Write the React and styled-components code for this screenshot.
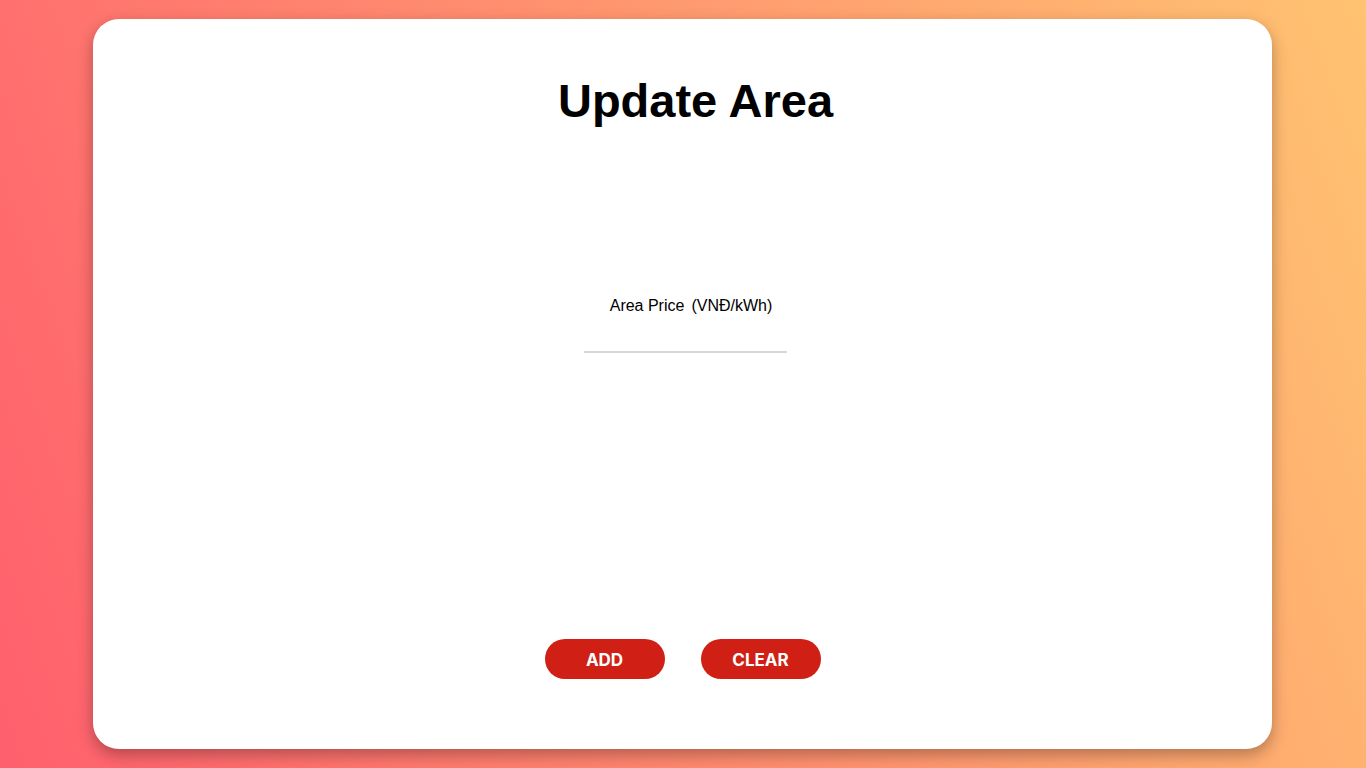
import React from "react";
import styled, { createGlobalStyle } from "styled-components";

const Global = createGlobalStyle`
  html, body { margin: 0; padding: 0; }
  body {
    min-height: 100vh;
    background: linear-gradient(70deg, #ff5f6d, #ffc371);
    font-family: "Liberation Sans", Arial, sans-serif;
  }
  #root { min-height: 100vh; }
`;

const Page = styled.div`
  height: 100vh;
  display: flex;
  align-items: center;
  justify-content: flex-start;
  padding-left: 93px;
  box-sizing: border-box;
`;

const Card = styled.div`
  width: 1179px;
  height: 730px;
  box-sizing: border-box;
  background: #fff;
  border-radius: 26px;
  box-shadow: 0 6px 16px rgba(0, 0, 0, 0.3);
  display: flex;
  flex-direction: column;
  align-items: center;
  padding: 55px 0 70px;
`;

const Title = styled.h1`
  margin: 0 0 0 26px;
  font-family: "Liberation Sans", Arial, sans-serif;
  font-weight: 700;
  font-size: 47px;
  line-height: 53px;
  color: #000;
`;

const Form = styled.div`
  margin-top: 170px;
  margin-left: 6px;
  display: flex;
  flex-direction: column;
  align-items: center;
`;

const Label = styled.label`
  margin-left: 11px;
  font-size: 16px;
  line-height: 18px;
  color: #000;
`;

const Unit = styled.span`
  margin-left: 7px;
`;

const Input = styled.input`
  margin-top: 8px;
  width: 203px;
  height: 30px;
  box-sizing: border-box;
  border: none;
  border-bottom: 2px solid #d6d6d6;
  outline: none;
  background: transparent;
  font-size: 16px;
  font-family: "Liberation Sans", Arial, sans-serif;
`;

const Buttons = styled.div`
  margin-top: auto;
  display: flex;
  gap: 36px;
`;

const Button = styled.button`
  width: 120px;
  height: 40px;
  border: none;
  border-radius: 20px;
  background: #d01f14;
  color: #fff;
  font-family: "Inter", "Open Sans", sans-serif;
  font-weight: 700;
  font-size: 17px;
  padding: 2px 0 0;
  cursor: pointer;
`;

export default function App() {
  return (
    <>
      <Global />
      <Page>
        <Card>
          <Title>Update Area</Title>
          <Form>
            <Label>
              Area Price<Unit>(VNĐ/kWh)</Unit>
            </Label>
            <Input type="text" />
          </Form>
          <Buttons>
            <Button>ADD</Button>
            <Button>CLEAR</Button>
          </Buttons>
        </Card>
      </Page>
    </>
  );
}
